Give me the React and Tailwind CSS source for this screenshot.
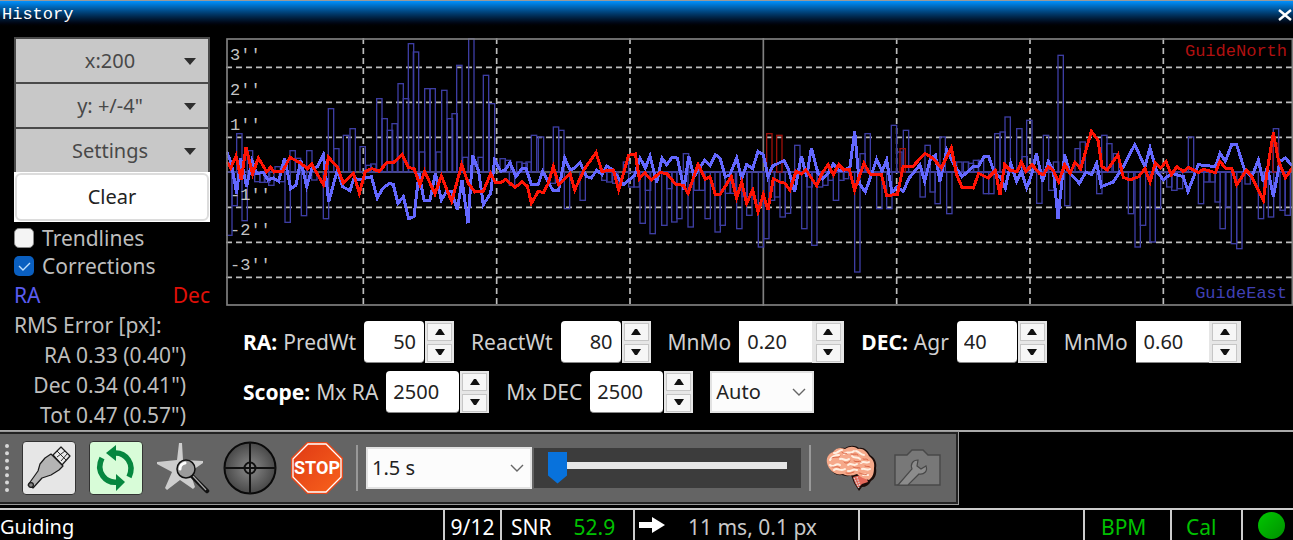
import React from "react";

const ZERO = 402;

// Guide pulses: [left edge, height]; positive pulses rise above the zero line.
const EAST_PULSES = [
  [2,-190],[18,-101],[32,115],[48,-146],[64,64],[86,-29],[101,-31],[115,-31],[128,-40],[147,16],[160,-29],[177,-151],[192,64],[208,41],[226,-131],[242,64],[257,-24],[292,-140],[307,190],[323,70],[352,110],[372,130],[402,76],[420,20],[434,24],[452,220],[468,160],[484,125],[498,145],[516,265],[532,220],[547,385],[562,360],[580,60],[596,250],[612,250],[630,60],[647,245],[664,160],[678,175],[692,320],[710,44],[728,400],[756,44],[772,290],[790,205],
  [822,40],[838,35],[850,-40],[872,30],[888,26],[900,30],[916,110],[937,105],[972,-34],[982,135],[998,125],[1015,-110],[1062,-85],[1127,-25],[1142,-30],[1160,-34],[1192,30],[1208,-45],[1224,-45],[1242,-154],[1258,-55],[1272,-185],[1307,-160],[1322,-50],[1337,-150],[1352,-140],[1372,55],[1386,-165],[1404,-55],[1420,-55],[1437,-140],[1467,-180],[1482,-160],[1498,-64],[1512,-64],[1532,-170],[1548,-74],[1562,-130],[1597,-225],[1613,-200],
  [1630,-85],[1645,-75],[1662,-135],[1678,-124],[1706,80],[1727,-170],[1743,-45],[1757,-220],[1774,-45],[1790,-40],[1806,-25],[1822,-85],[1838,-25],[1852,-20],[1886,-300],[1902,55],[1917,115],[1952,-110],[1982,-110],[1996,140],[2012,60],[2032,125],[2082,-75],[2097,80],[2112,-60],[2127,-95],[2142,105],[2162,-125],[2192,30],[2212,30],[2227,26],[2242,35],[2257,35],[2272,-65],[2288,-65],[2306,115],[2322,120],[2337,165],[2372,130],[2388,46],[2402,155],[2432,-94],
  [2452,110],[2468,-55],[2482,30],[2496,350],[2516,-101],[2547,70],[2562,90],[2612,-65],[2627,110],[2642,85],[2662,55],[2707,-125],[2727,-225],[2743,-160],[2772,-210],[2788,-110],[2822,-45],[2837,-55],[2854,-50],[2887,105],[2917,-95],[2933,-30],[2952,-30],[2967,-90],[2982,-170],[3000,-105],[3016,-215],[3032,-230],[3057,-36],[3097,-140],[3127,-135],[3142,130],[3162,-115],[3177,-130],
];
const NORTH_PULSES = [[1622,115],[1652,110],[2022,70],[3140,86]];

const DEC_LINE =
  "2,371 14,390 30,354 46,426 60,328 80,408 97,360 122,401 134,388 144,402 170,400 192,358 222,374 244,392 257,378 292,440 307,358 334,386 352,436 382,406 400,466 418,400 438,392 460,400 482,374 502,374 528,350 547,388 564,392 582,440 596,400 627,468 646,414 677,490 707,380 727,436 747,462 772,460 794,406 " +
  "808,434 827,432 838,424 867,448 888,432 904,444 916,496 937,460 952,464 966,438 982,386 998,440 1032,406 1046,456 1076,392 1110,344 1128,400 1162,396 1178,456 1208,352 1228,348 1240,422 1256,404 1276,426 1302,404 1322,406 1348,438 1372,442 1386,466 1416,380 1438,424 1452,416 1468,470 1482,470 1516,416 1532,480 1547,432 1562,496 1580,456 1596,522 1612,470 " +
  "1626,516 1642,422 1662,432 1677,436 1692,456 1710,400 1726,408 1740,396 1772,444 1788,406 1806,380 1822,410 1838,380 1854,396 1870,394 1886,456 1914,376 1932,408 1966,410 1982,472 2014,470 2032,384 2062,384 2097,346 2122,362 2146,390 2176,330 2192,410 2208,448 2242,450 2258,406 2286,420 2308,398 2322,470 2336,380 2354,398 2374,400 2386,372 2400,400 2418,380 " +
  "2440,406 2452,410 2467,386 2482,398 2498,432 2516,380 2532,406 2547,374 2564,392 2596,280 2616,306 2628,386 2644,396 2676,350 2692,418 2712,426 2738,416 2757,392 2772,432 2788,374 2804,390 2820,370 2836,410 2852,386 2872,400 2888,388 2917,404 2932,394 2968,404 2982,370 2998,390 3017,390 3032,440 3062,396 3077,416 3112,486 3124,396 3142,284 3157,366 3178,420 3201,386";

const RA_LINE =
  "2,341 16,376 32,466 44,360 62,446 78,368 92,406 112,404 126,426 142,420 158,430 176,360 194,452 210,442 224,366 242,446 258,392 274,386 292,350 308,492 334,396 350,446 372,458 384,420 402,426 418,420 436,416 454,480 470,452 490,436 502,440 516,496 532,476 548,542 564,536 579,406 594,486 612,486 628,406 646,486 662,460 677,460 694,516 708,426 726,556 740,352 758,400 772,500 794,466 " +
  "806,366 824,400 838,396 852,374 870,416 888,392 900,392 916,440 936,440 950,400 964,426 980,456 998,456 1016,360 1032,396 1046,390 1062,374 1082,416 1096,420 1112,396 1128,410 1142,384 1160,396 1192,440 1226,412 1242,360 1258,390 1272,354 1292,434 1308,360 1322,380 1338,358 1354,360 1374,454 1388,354 1404,416 1436,366 1452,382 1468,350 1482,360 1498,416 1512,410 1532,360 1547,422 1562,380 1580,392 1596,340 1612,350 " +
  "1626,416 1640,384 1674,368 1688,396 1706,462 1726,354 1742,416 1756,330 1776,406 1790,422 1806,406 1822,378 1838,396 1857,396 1872,386 1886,280 1900,436 1918,462 1934,416 1952,364 1968,400 1982,366 1998,466 2012,446 2032,460 2048,422 2082,380 2096,430 2114,360 2128,352 2142,430 2162,336 2182,376 2208,416 2242,386 2258,384 2274,356 2288,356 2306,406 2322,416 2338,450 2354,376 2372,430 2386,400 2402,450 2418,406 " +
  "2431,346 2450,430 2467,370 2482,396 2496,542 2516,350 2532,406 2560,436 2580,402 2596,410 2612,376 2626,446 2662,432 2692,386 2726,320 2757,386 2772,330 2792,400 2812,426 2836,406 2872,416 2886,460 2917,380 2968,386 2982,346 2998,370 3017,320 3032,320 3057,400 3077,416 3097,366 3112,432 3124,386 3142,476 3162,370 3178,360 3201,386";

function Pulses({ data, color }) {
  return data.map(([x, h]) => (
    <rect key={x} x={x} y={h > 0 ? ZERO - h : ZERO} width="16" height={Math.abs(h)} fill="none" stroke={color} strokeWidth="4" />
  ));
}

function GuideChart() {
  return (
    <section aria-label="Guiding history" className="relative h-[268px]">
      <svg viewBox="0 0 3201 804" preserveAspectRatio="none" className="block h-full w-full">
        <g stroke="#bdbdbd" strokeWidth="5" strokeDasharray="18 12">
          {[88, 193, 298, 508, 613, 718].map((y) => (
            <line key={y} x1="0" x2="3201" y1={y} y2={y} />
          ))}
          {[412, 812, 1212, 2012, 2412, 2812].map((x) => (
            <line key={x} y1="0" y2="804" x1={x} x2={x} />
          ))}
        </g>
        <g stroke="#808080" strokeWidth="5">
          <line x1="0" x2="3201" y1={ZERO} y2={ZERO} />
          <line x1="1612" x2="1612" y1="0" y2="804" />
        </g>
        <line x1="1220" x2="3201" y1={ZERO} y2={ZERO} stroke="#4343a4" strokeWidth="4" />
        <Pulses data={EAST_PULSES} color="#3d3da2" />
        <Pulses data={NORTH_PULSES} color="#9c100a" />
        <g shapeRendering="crispEdges" fill="none" strokeWidth="9">
          <polyline points={RA_LINE} stroke="#6468ff" />
          <polyline points={DEC_LINE} stroke="#ff1405" />
        </g>
        <rect x="3" y="3" width="3196" height="798" fill="none" stroke="#808080" strokeWidth="5" />
      </svg>
      <div className="absolute top-0 left-1 flex flex-col font-['Liberation_Mono'] text-[17px] leading-[35px] text-[#c4c4c4]">
        <span>3′′</span>
        <span>2′′</span>
        <span>1′′</span>
        <span className="mt-[35px]">-1′′</span>
        <span>-2′′</span>
        <span>-3′′</span>
      </div>
      <span className="absolute top-0 right-[6px] font-['Liberation_Mono'] text-[17px] leading-7 text-[#b01010]">GuideNorth</span>
      <span className="absolute right-[6px] bottom-0 font-['Liberation_Mono'] text-[17px] leading-6 text-[#4040b4]">GuideEast</span>
    </section>
  );
}

function MenuButton({ children }) {
  return (
    <button aria-haspopup="menu" className="flex h-[45px] w-full items-center border-2 border-b-0 border-[#4a4a4a] bg-[#c8c8c8] text-xl text-[#484848]">
      <span className="flex-1 pl-5 text-center">{children}</span>
      <svg viewBox="0 0 12 8" className="mr-3 h-2 w-3">
        <path d="M0 1h12L6 8z" fill="#2e2e2e" />
      </svg>
    </button>
  );
}

function StepButton({ label, down }) {
  return (
    <button aria-label={label} className="flex h-[18px] w-[25px] items-center justify-center border border-[#c6c6c6] bg-[#f6f6f6]">
      <svg viewBox="0 0 10 7" className="h-[7px] w-[10px]">
        <path d={down ? "M0 0h10L6 6H4z" : "M0 7h10L6 1H4z"} fill="#111" />
      </svg>
    </button>
  );
}

function Spin({ label, value, wide, right, joined }) {
  const id = React.useId();
  return (
    <div className="flex items-center gap-2">
      <label htmlFor={id} className="text-[#d0d0d0]">{label}</label>
      <div className={joined ? "flex h-[42px] bg-[#e6e6e6]" : "flex h-[42px] gap-px"}>
        <input
          id={id}
          defaultValue={value}
          className={
            "h-full border-b border-[#888] bg-white text-xl text-[#222] outline-none " +
            (wide ? "w-[73px] " : "w-[60px] ") +
            (right ? "rounded-sm pr-2 text-right" : joined ? "pl-2" : "rounded-sm pl-[7px]")
          }
        />
        <div className={"flex flex-col items-center justify-center gap-[3px] bg-[#e6e6e6] " + (joined ? "w-8" : "w-[29px]")}>
          <StepButton label={"Increase " + label} />
          <StepButton label={"Decrease " + label} down />
        </div>
      </div>
    </div>
  );
}

function Drop({ label, value, className }) {
  return (
    <div className={"relative " + className}>
      <select aria-label={label} className="h-full w-full appearance-none border-2 border-[#e2e2e2] bg-[#fcfcfc] pl-1 text-xl text-[#222] outline-none">
        <option>{value}</option>
      </select>
      <svg viewBox="0 0 14 8" className="pointer-events-none absolute top-1/2 right-2 h-2 w-[14px] -translate-y-1/2">
        <path d="M1 1l6 6 6-6" fill="none" stroke="#666" strokeWidth="1.4" />
      </svg>
    </div>
  );
}

const CableIcon = () => (
  <svg viewBox="0 0 52 52" className="size-[52px]">
    <g stroke="#1a1a1a" strokeWidth="1.2" strokeLinejoin="round">
      <path d="M30 13l8-8 9 9-8 9z" fill="#e8e8e8" />
      <path d="M34 9l9 9M34 15l8-6M38 19l6-7" fill="none" strokeWidth="0.9" />
      <path d="M28 12l12 12-4 4-8 5-9 3L10 46l-5-3 10-14 2-7 5-6z" fill="#b4b4b4" />
      <circle cx="8" cy="43" r="2.4" fill="#888" />
    </g>
  </svg>
);

const LoopIcon = () => (
  <svg viewBox="0 0 52 52" className="size-[52px]">
    <g fill="none" stroke="#06873f" strokeWidth="5.5">
      <path d="M24 11C36 10 45 22 39 35" />
      <path d="M28 40C16 42 5 30 12 16" />
    </g>
    <path d="M16 11L26 3v16zM35 40l-9-8v17z" fill="#06873f" />
  </svg>
);

const StarIcon = () => (
  <svg viewBox="0 0 54 54" className="h-[54px] w-[54px]">
    <path d="M23 2h3l1 17 20 1v2L34 31l5 15-2 2-13-9-13 10-2-2 7-16L1 23v-2l20-2z" fill="#cdcdcd" />
    <path d="M36 35l15 15" stroke="#111" strokeWidth="4.5" strokeLinecap="round" />
    <path d="M37 35l13 14" stroke="#aaa" strokeWidth="1.2" />
    <circle cx="30" cy="28" r="9" fill="#9b9b9b" stroke="#111" strokeWidth="1.5" />
    <path d="M24 28a6 6 0 0 1 5-6" fill="none" stroke="#fff" strokeWidth="3" strokeLinecap="round" />
  </svg>
);

const GuideIcon = () => (
  <svg viewBox="0 0 54 54" className="h-[54px] w-[54px]">
    <defs>
      <radialGradient id="scope">
        <stop offset="0" stopColor="#8a8a8a" />
        <stop offset="1" stopColor="#484848" />
      </radialGradient>
    </defs>
    <circle cx="27" cy="27" r="25.5" fill="url(#scope)" stroke="#0a0a0a" strokeWidth="2" />
    <path d="M27 1v52M1 27h52" stroke="#111" strokeWidth="2" />
    <circle cx="27" cy="27" r="5.5" fill="none" stroke="#111" strokeWidth="2" />
  </svg>
);

const StopIcon = () => (
  <svg viewBox="0 0 54 54" className="h-[54px] w-[54px]">
    <defs>
      <linearGradient id="stop" x1="0" y1="0" x2="1" y2="1">
        <stop offset="0" stopColor="#e03a14" />
        <stop offset="1" stopColor="#f8621c" />
      </linearGradient>
    </defs>
    <path d="M17 1h20l16 16v20L37 53H17L1 37V17z" fill="#e8481a" />
    <path d="M18 3h18l15 15v18L36 51H18L3 36V18z" fill="url(#stop)" stroke="#fff" strokeWidth="1.3" />
    <text x="27" y="33" textAnchor="middle" fontFamily="Roboto, sans-serif" fontWeight="700" fontSize="18" fill="#fff">STOP</text>
  </svg>
);

const BrainIcon = () => (
  <svg viewBox="0 0 52 46" className="h-[46px] w-[52px]">
    <path d="M3 19C1 14 3 9 8 7c3-4 8-5 12-4 5-3 10-3 14 0 5-1 9 3 11 7 5 3 7 8 6 13 1 6-1 11-5 13-2 4-5 6-9 6l-3 4-5-8-3-8c-3 2-6 1-9 0-6 1-12-3-14-11z" fill="#1c0d0a" />
    <path d="M28 32l12-3 3 8-6 2-4 4-3-5z" fill="#e4695a" />
    <path d="M29 33l5 10M32 32l3 9" stroke="#ddd" strokeWidth="1.2" strokeDasharray="1.5 1" />
    <path d="M2 18C1 13 3 9 8 7c3-4 7-5 12-3 5-3 9-3 13 0 5-1 9 3 11 7 4 3 6 7 5 12 0 5-1 9-5 12-5-1-9-3-12-6-5 2-10 2-14 0-7 2-14-3-16-11z" fill="#f6a98a" />
    <g fill="none" stroke="#fff0e2" strokeWidth="2" strokeLinecap="round">
      <path d="M5 15c2-4 5-5 9-5M9 8c3 1 5-3 8-3M19 9c3-4 6 1 10-3M31 6c3 0 4 4 8 4M5 20c4 4 5-3 10 0M9 25c3-3 7 2 11-1M15 14c4-1 5 3 9 0M27 11c2 3 6 0 8 3M23 20c4-3 5 2 9-1M23 26c3 1 5-3 9-1M36 18c3-3 5 1 8-1M37 24c3-1 5 2 8 0M38 30c2 0 3-1 5 0" />
    </g>
    <g fill="none" stroke="#da6647" strokeWidth="1" strokeLinecap="round">
      <path d="M7 13c3-2 6 1 8-2M17 7c1 3 4 0 5 2M26 9c3 1 5-1 7 1M7 22c3 1 4-2 8 1M19 17c2 2 4 1 6-1M29 16c3 2 5-1 7 1M28 22c3 2 5 0 7 1M34 28c3 0 4 3 8 1M38 14c2 1 3-1 5 1M40 21c2 1 4 0 5 1M21 28c3 1 5 0 8-1" />
    </g>
  </svg>
);

const CameraIcon = () => (
  <svg viewBox="0 0 48 38" className="h-[38px] w-12">
    <path d="M2 6h12l5-5h11l5 5h12v30H2z" fill="#787878" stroke="#484848" strokeWidth="1.4" />
    <path d="M5 36l14-16c-2-5 1-9 6-9l-1 6 4 3 5-3c2 5-2 9-7 8L15 36z" fill="#8c8c8c" stroke="#484848" strokeWidth="1.2" />
  </svg>
);

export default function App() {
  return (
    <div className="flex min-h-screen flex-col bg-black font-['Noto_Sans'] text-[21px] leading-[30px]">
      <header className="flex h-7 items-center justify-between border-t border-[#999] bg-linear-to-b from-[#0091ff] to-black pl-[2px] text-white">
        <h1 className="font-['Liberation_Mono'] text-[17px] leading-6">History</h1>
        <button aria-label="Close" className="flex h-6 w-[15px] items-center">
          <svg viewBox="0 0 14 12" className="h-3 w-[14px]">
            <path d="M1 1l12 10M13 1L1 11" stroke="#fff" strokeWidth="2.4" />
          </svg>
        </button>
      </header>

      <main className="flex flex-1 gap-4 pl-[14px] text-[#bdbdbd]">
        <aside className="w-[196px] shrink-0 pt-[9px]">
          <MenuButton>x:200</MenuButton>
          <MenuButton>y: +/-4"</MenuButton>
          <MenuButton>Settings</MenuButton>
          <div className="bg-white p-px">
            <button className="block h-12 w-full rounded-md border-2 border-[#dcdcdc] bg-white text-xl text-[#222]">Clear</button>
          </div>
          <label className="mt-[2px] flex h-7 items-center gap-2">
            <input type="checkbox" className="size-5 appearance-none rounded-[5px] border border-[#888] bg-[#f4f4f4]" />
            Trendlines
          </label>
          <label className="flex h-7 items-center gap-2">
            <span className="relative flex size-5">
              <input type="checkbox" defaultChecked className="size-5 appearance-none rounded-[5px] bg-[#0a5fc0]" />
              <svg viewBox="0 0 20 20" className="pointer-events-none absolute inset-0">
                <path d="M5 10l4 4 7-7" fill="none" stroke="#bfe0ff" strokeWidth="1.4" />
              </svg>
            </span>
            Corrections
          </label>
          <div className="flex justify-between">
            <span className="text-[#5a5cf0]">RA</span>
            <span className="text-[#e01008]">Dec</span>
          </div>
          <div>RMS Error [px]:</div>
          <div className="w-[172px] text-right">
            <div>RA 0.33 (0.40")</div>
            <div>Dec 0.34 (0.41")</div>
            <div>Tot 0.47 (0.57")</div>
          </div>
        </aside>

        <div className="min-w-0 flex-1 pt-[10px]">
          <GuideChart />
          <div className="mt-[15px] ml-[17px] flex gap-[17px]">
            <div className="flex items-center gap-[6px]">
              <b className="text-white">RA:</b>
              <Spin label="PredWt" value="50" right />
            </div>
            <Spin label="ReactWt" value="80" right />
            <Spin label="MnMo" value="0.20" wide joined />
            <div className="flex items-center gap-[6px]">
              <b className="text-white">DEC:</b>
              <Spin label="Agr" value="40" />
            </div>
            <Spin label="MnMo" value="0.60" wide joined />
          </div>
          <div className="mt-2 ml-[17px] flex gap-[17px]">
            <div className="flex items-center gap-[6px]">
              <b className="text-white">Scope:</b>
              <Spin label="Mx RA" value="2500" wide />
            </div>
            <Spin label="Mx DEC" value="2500" wide />
            <Drop label="Dec guide mode" value="Auto" className="h-[42px] w-[104px]" />
          </div>
        </div>
      </main>

      <div className="flex h-[78px] shrink-0 items-start border-t-2 border-[#aaa]">
        <div className="flex h-[72px] w-[958px] items-center border-2 border-l-0 border-[#222] bg-[#646464] pl-[5px] outline outline-[#999]">
          <div className="h-12 border-l-4 border-dotted border-[#d8d8d8]" />
          <div className="ml-[13px] flex items-center gap-[13px]">
            <button aria-label="Connect equipment" className="flex size-[54px] items-center justify-center rounded border border-[#333] bg-[#e6e6e6]"><CableIcon /></button>
            <button aria-label="Loop exposures" className="flex size-[54px] items-center justify-center rounded border border-[#333] bg-[#d8fcd8]"><LoopIcon /></button>
            <button aria-label="Select star"><StarIcon /></button>
            <button aria-label="Guide"><GuideIcon /></button>
            <button aria-label="Stop"><StopIcon /></button>
          </div>
          <div className="ml-3 h-[46px] w-[2px] bg-[#999]" />
          <Drop label="Exposure" value="1.5 s" className="ml-2 h-[42px] w-[166px]" />
          <div className="ml-[2px] flex h-10 w-[267px] items-center bg-[#3c3c3c] px-[14px]">
            <input
              type="range"
              aria-label="Stretch"
              min="0"
              max="100"
              defaultValue="0"
              className="mb-[6px] h-8 w-full appearance-none bg-transparent [&::-webkit-slider-runnable-track]:h-[7px] [&::-webkit-slider-runnable-track]:bg-[#e6e6e6] [&::-webkit-slider-thumb]:-mt-[10px] [&::-webkit-slider-thumb]:h-8 [&::-webkit-slider-thumb]:w-[19px] [&::-webkit-slider-thumb]:appearance-none [&::-webkit-slider-thumb]:bg-[#0872dc] [&::-webkit-slider-thumb]:[clip-path:polygon(0_0,100%_0,100%_75%,50%_100%,0_75%)]"
            />
          </div>
          <div className="ml-2 h-[46px] w-[2px] bg-[#999]" />
          <button aria-label="Advanced settings" className="ml-[14px]"><BrainIcon /></button>
          <button aria-label="Camera settings" className="ml-4"><CameraIcon /></button>
        </div>
      </div>

      <footer className="flex h-8 shrink-0 items-stretch border-t-2 border-[#ccc] text-white leading-[34px]">
        <div className="w-[443px] text-xl leading-[34px]">Guiding</div>
        <div className="w-[57px] border-l-2 border-[#ccc] text-center">9/12</div>
        <div className="flex w-[133px] border-l-2 border-[#ccc] pl-[9px]">
          <span>SNR</span>
          <span className="ml-[22px] text-[#00c000]">52.9</span>
        </div>
        <div className="flex w-[225px] border-l-2 border-[#ccc] pl-1">
          <svg viewBox="0 0 26 18" className="mt-[6px] h-[18px] w-[26px]">
            <path d="M0 6h13V1l13 8-13 8v-5H0z" fill="#fff" />
          </svg>
          <span className="ml-[23px] text-[#c8c8c8]">11 ms, 0.1 px</span>
        </div>
        <div className="flex-1 border-l-2 border-[#ccc]" />
        <div className="w-[87px] border-l-2 border-[#ccc] pl-4 text-[#00c000]">BPM</div>
        <div className="w-[71px] border-l-2 border-[#ccc] pl-[14px] text-[#00c000]">Cal</div>
        <div className="w-[52px] border-l-2 border-[#ccc] pt-[2px] pl-[15px]">
          <div className="size-[27px] rounded-full bg-linear-to-br from-[#00c800] to-[#009000]" />
        </div>
      </footer>
    </div>
  );
}
